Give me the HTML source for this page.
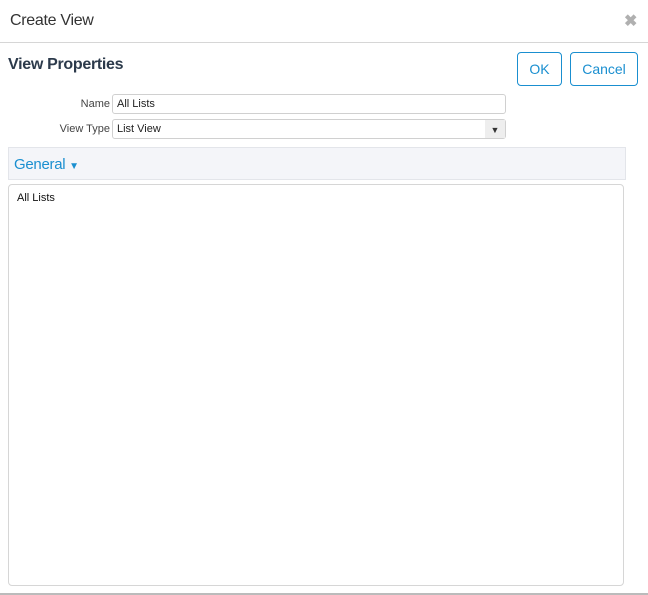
<!DOCTYPE html>
<html><head><style>
*{box-sizing:border-box;margin:0;padding:0}
body{width:648px;height:595px;background:#fff;font-family:"Liberation Sans",sans-serif;position:relative;overflow:hidden}
.a{position:absolute}
</style></head><body>
<div class="a" style="left:10px;top:12px;font-size:16px;color:#333;letter-spacing:-0.3px">Create View</div>
<div class="a" style="left:624px;top:11px;font-size:16px;color:#b0b0b0;font-weight:bold">✖</div>
<div class="a" style="left:0;top:42px;width:648px;height:1px;background:#d6d6d6"></div>
<div class="a" style="left:8px;top:56px;font-size:16px;font-weight:bold;color:#2c3a4b;letter-spacing:-0.3px">View Properties</div>
<div class="a" style="left:517px;top:52px;width:45px;height:34px;border:1px solid #1a8fd0;border-radius:4px;color:#1a8fd0;font-size:14px;text-align:center;line-height:33px">OK</div>
<div class="a" style="left:570px;top:52px;width:68px;height:34px;border:1px solid #1a8fd0;border-radius:4px;color:#1a8fd0;font-size:14px;text-align:center;line-height:33px">Cancel</div>
<div class="a" style="left:40px;top:98px;width:70px;text-align:right;font-size:11px;color:#444">Name</div>
<div class="a" style="left:112px;top:94px;width:394px;height:20px;border:1px solid #d0d0d0;border-radius:3px;font-size:11px;padding:3px 4px;color:#222">All Lists</div>
<div class="a" style="left:30px;top:123px;width:80px;text-align:right;font-size:11px;color:#444">View Type</div>
<div class="a" style="left:112px;top:119px;width:394px;height:20px;border:1px solid #d0d0d0;border-radius:3px;font-size:11px;padding:3px 4px;color:#222">List View<div class="a" style="right:0;top:0;width:20px;height:18px;background:#eee;font-size:9px;text-align:center;line-height:20px;color:#333">▼</div></div>
<div class="a" style="left:8px;top:147px;width:618px;height:33px;background:#f4f5f9;border:1px solid #e3e5ea"></div>
<div class="a" style="left:14px;top:156px;font-size:15px;color:#1a8fd0;letter-spacing:-0.3px">General <span style="font-size:10px">▼</span></div>
<div class="a" style="left:8px;top:184px;width:616px;height:402px;border:1px solid #d6d6d6;border-radius:4px"></div>
<div class="a" style="left:17px;top:192px;font-size:11px;color:#111">All Lists</div>
<div class="a" style="left:0;top:593px;width:648px;height:2px;background:#bbb"></div>
</body></html>
